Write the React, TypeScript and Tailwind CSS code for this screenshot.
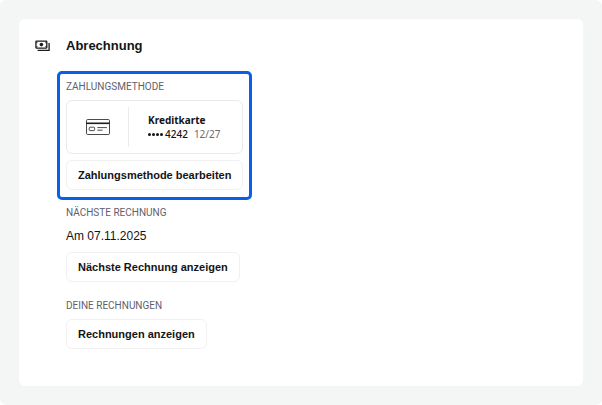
import type { ReactNode } from "react";

function PaymentsIcon() {
  return (
    <svg viewBox="0 0 16 12" className="w-4 h-3 text-[#1c1c1c]" fill="none" stroke="currentColor" strokeWidth="1.3" aria-hidden="true">
      <rect x="0.9" y="1.2" width="10.9" height="6.9" rx="0.5" />
      <circle cx="6.4" cy="4.6" r="1.8" fill="currentColor" stroke="none" />
      <path d="M1 2.7h1.6M1 6.6h1.6M10.2 2.7h1.6M10.2 6.6h1.6" strokeWidth="0.8" />
      <path d="M2.6 10.3h11.5V3" />
    </svg>
  );
}

function CardIcon() {
  return (
    <svg viewBox="0 0 24 16" className="w-6 h-4 text-[#1c1c1c]" fill="none" stroke="currentColor" strokeWidth="0.8" aria-hidden="true">
      <rect x="0.5" y="0.5" width="23" height="15" rx="1.2" />
      <path d="M0.5 4.3h23" strokeWidth="1.6" />
      <rect x="3.2" y="8.2" width="5.4" height="3.4" rx="0.9" />
      <path d="M11.3 8.6h9.5M11.3 11.2h5.2" />
    </svg>
  );
}

function SectionLabel({ children }: { children: ReactNode }) {
  return <h3 className="text-[10px] leading-[14px] uppercase text-[#5f5f6e] font-['Roboto',sans-serif]">{children}</h3>;
}

function OutlineButton({ children }: { children: ReactNode }) {
  return (
    <button
      type="button"
      className="h-[30px] px-[11px] rounded-md border border-[#f1f1f1] bg-white text-[11px] leading-4 font-bold whitespace-nowrap"
    >
      {children}
    </button>
  );
}

export default function App() {
  return (
    <main className="min-h-screen flex rounded-md bg-[#f4f6f6] p-[19px] font-['Liberation_Sans',Arial,sans-serif] text-[#141414]">
      <section className="flex-1 rounded-md bg-white px-4 pt-[18px] pb-9">
        <header className="flex items-center gap-[15px]">
          <PaymentsIcon />
          <h2 className="text-[13px] leading-[18px] font-bold">Abrechnung</h2>
        </header>

        <div className="flex flex-col items-start pl-[22px] pt-4">
          <div className="flex flex-col rounded-[5px] border-3 border-[#0561e8] p-[6px] pb-[7px]">
            <SectionLabel>Zahlungsmethode</SectionLabel>
            <div className="mt-[6px] flex h-[54px] items-center rounded-md border border-[#e9e9e9] font-['Noto_Sans',sans-serif] text-[10px] leading-[14px]">
              <div className="flex w-[61px] justify-center">
                <CardIcon />
              </div>
              <div className="h-10 border-l border-[#ebebeb]" />
              <div className="pl-[19px]">
                <p className="font-bold">Kreditkarte</p>
                <p className="flex items-center gap-[6px]">
                  <span className="flex items-center gap-[2px] font-medium">
                    <span className="flex gap-px" aria-hidden="true">
                      <i className="size-[3px] rounded-full bg-current" />
                      <i className="size-[3px] rounded-full bg-current" />
                      <i className="size-[3px] rounded-full bg-current" />
                      <i className="size-[3px] rounded-full bg-current" />
                    </span>
                    4242
                  </span>
                  <span className="text-[#6b6b6b]">12/27</span>
                </p>
              </div>
            </div>
            <div className="mt-[6px] flex flex-col">
              <OutlineButton>Zahlungsmethode bearbeiten</OutlineButton>
            </div>
          </div>

          <div className="flex flex-col items-start pl-[9px] pt-[6px]">
            <SectionLabel>Nächste Rechnung</SectionLabel>
            <p className="my-[7px] text-[12px] leading-[18px]">Am 07.11.2025</p>
            <OutlineButton>Nächste Rechnung anzeigen</OutlineButton>
          </div>

          <div className="flex flex-col items-start gap-[6px] pl-[9px] pt-[17px]">
            <SectionLabel>Deine Rechnungen</SectionLabel>
            <OutlineButton>Rechnungen anzeigen</OutlineButton>
          </div>
        </div>
      </section>
    </main>
  );
}
